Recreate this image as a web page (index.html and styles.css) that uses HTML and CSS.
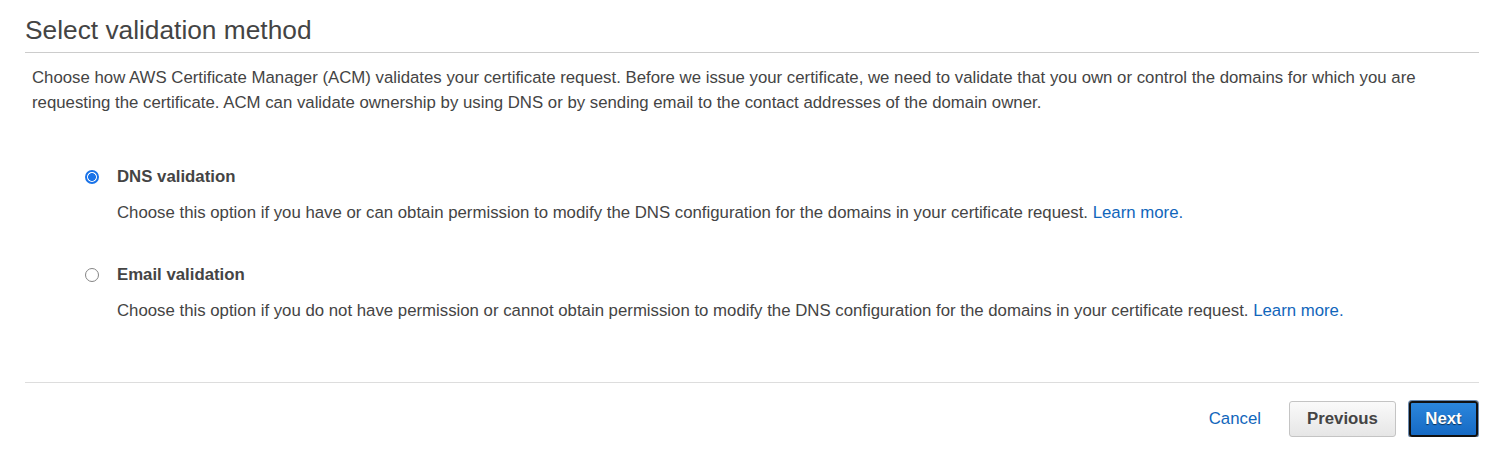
FILE: index.html
```html
<!DOCTYPE html>
<html>
<head>
<meta charset="utf-8">
<link rel="stylesheet" href="styles.css">
</head>
<body>
<div class="page">
  <h2 class="title">Select validation method</h2>
  <p class="intro">Choose how AWS Certificate Manager (ACM) validates your certificate request. Before we issue your certificate, we need to validate that you own or control the domains for which you are requesting the certificate. ACM can validate ownership by using DNS or by sending email to the contact addresses of the domain owner.</p>
  <div class="options">
    <div class="option">
      <div class="option-head">
        <span class="radio checked"></span>
        <span class="label">DNS validation</span>
      </div>
      <p class="desc">Choose this option if you have or can obtain permission to modify the DNS configuration for the domains in your certificate request. <a class="link" href="#">Learn more.</a></p>
    </div>
    <div class="option">
      <div class="option-head">
        <span class="radio"></span>
        <span class="label">Email validation</span>
      </div>
      <p class="desc">Choose this option if you do not have permission or cannot obtain permission to modify the DNS configuration for the domains in your certificate request. <a class="link" href="#">Learn more.</a></p>
    </div>
  </div>
  <div class="footer">
    <a class="cancel" href="#">Cancel</a>
    <button class="btn btn-secondary">Previous</button>
    <button class="btn btn-primary">Next</button>
  </div>
</div>
</body>
</html>
```
FILE: styles.css
```css
html, body {
  margin: 0;
  padding: 0;
  background: #fff;
}
body {
  font-family: "Liberation Sans", Arial, sans-serif;
  color: #444;
}
.page {
  padding: 0 16px 0 25px;
}
.title {
  margin: 0;
  padding: 14px 0 6px 0;
  font-size: 26.3px;
  font-weight: normal;
  line-height: 32px;
  color: #444;
  border-bottom: 1px solid #ccc;
}
.intro {
  margin: 12px 0 0 0;
  padding-left: 7px;
  font-size: 16.8px;
  line-height: 25px;
}
.options {
  padding: 52px 0 60px 60px;
  display: flex;
  flex-direction: column;
  gap: 41px;
}
.option-head {
  display: flex;
  align-items: center;
  height: 20px;
}
.radio {
  width: 14px;
  height: 14px;
  border: 1px solid #858585;
  border-radius: 50%;
  box-sizing: border-box;
  margin-right: 18px;
  flex: none;
}
.radio.checked {
  border: 2px solid #1a73e8;
  background: radial-gradient(circle, #1a73e8 0 3.6px, #fff 4.2px);
}
.label {
  font-weight: bold;
  font-size: 16.8px;
  color: #444;
}
.desc {
  margin: 15px 0 0 32px;
  font-size: 16.8px;
  line-height: 22px;
}
.link {
  color: #1166bb;
  text-decoration: none;
}
.footer {
  border-top: 1px solid #ddd;
  display: flex;
  justify-content: flex-end;
  align-items: center;
  padding-top: 18px;
}
.cancel {
  color: #1166bb;
  text-decoration: none;
  font-size: 16.8px;
  margin-right: 28px;
}
.btn {
  font-family: "Liberation Sans", Arial, sans-serif;
  font-size: 16.8px;
  font-weight: bold;
  height: 36px;
  border-radius: 3px;
  cursor: pointer;
  padding: 0;
}
.btn-secondary {
  width: 107px;
  color: #444;
  border: 1px solid #c4c4c4;
  background: linear-gradient(#fafafa, #e6e6e6);
  margin-right: 13px;
}
.btn-primary {
  width: 69px;
  margin-right: 1px;
  color: #fff;
  border: 2px solid #111;
  background: linear-gradient(#2b86dc, #166ac4);
  box-shadow: 0 0 0 1px #6b8bb0;
  text-shadow: 0 1px 1px rgba(0,0,0,0.6);
}
```
